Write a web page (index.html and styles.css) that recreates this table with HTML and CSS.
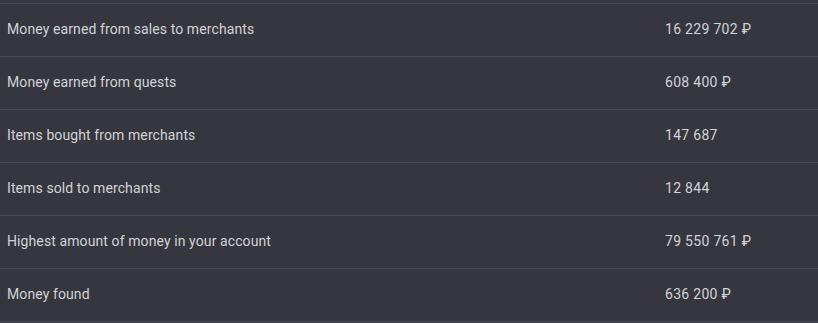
FILE: index.html
```html
<!DOCTYPE html>
<html>
<head>
<meta charset="utf-8">
<link rel="stylesheet" href="styles.css">
</head>
<body>
<div class="stats">
  <div class="row"><div class="label">Money earned from sales to merchants</div><div class="value">16 229 702 ₽</div></div>
  <div class="row"><div class="label">Money earned from quests</div><div class="value">608 400 ₽</div></div>
  <div class="row"><div class="label">Items bought from merchants</div><div class="value">147 687</div></div>
  <div class="row"><div class="label">Items sold to merchants</div><div class="value">12 844</div></div>
  <div class="row"><div class="label">Highest amount of money in your account</div><div class="value">79 550 761 ₽</div></div>
  <div class="row"><div class="label">Money found</div><div class="value">636 200 ₽</div></div>
</div>
</body>
</html>
```
FILE: styles.css
```css
html, body {
  margin: 0;
  padding: 0;
  background: #36363f;
}
body {
  font-family: Roboto, "Liberation Sans", sans-serif;
  font-size: 14px;
  letter-spacing: 0.1px;
  color: #d2d3d8;
}
.stats {
  padding-top: 3px;
}
.row {
  display: flex;
  align-items: center;
  height: 50px;
  padding-bottom: 2px;
  border-top: 1px solid #4b4b53;
}
.row:last-child {
  border-bottom: 1px solid #4b4b53;
}
.label {
  flex: 0 0 665px;
  padding-left: 7px;
  box-sizing: border-box;
}
.value {
  flex: 1;
  letter-spacing: 0.3px;
}
```
